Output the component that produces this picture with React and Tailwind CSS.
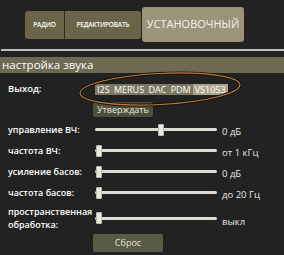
import React from "react";

const rows = [
  { label: "управление ВЧ:", value: "0 дБ", pos: 63 },
  { label: "частота ВЧ:", value: "от 1 кГц", pos: 1 },
  { label: "усиление басов:", value: "0 дБ", pos: 1 },
  { label: "частота басов:", value: "до 20 Гц", pos: 1 },
];

function Slider({ pos }) {
  return (
    <div className="relative w-[122px] h-[12px] flex items-center">
      <div className="w-full h-[3px] bg-[#dcdcd4] rounded-sm" />
      <div
        className="absolute top-0 w-[6px] h-[12px] bg-[#e8e8e0] rounded-[1px] border border-[#bdbdb0]"
        style={{ left: pos }}
      />
    </div>
  );
}

function App() {
  return (
    <div
      className="relative w-[284px] h-[255px] bg-[#222222] text-white overflow-hidden"
      style={{ fontFamily: "'Open Sans', 'DejaVu Sans', sans-serif" }}
    >
      <div className="flex items-center h-[35px] mt-[7px] ml-[25px]">
        <div className="flex h-[28px] bg-[#6a6549] rounded-[3px]">
          <div className="w-[40px] flex items-center justify-center text-[6.5px] font-semibold tracking-tight border-r border-[#2a2a22]">
            РАДИО
          </div>
          <div className="w-[76px] flex items-center justify-center text-[6.5px] font-semibold tracking-tight">
            РЕДАКТИРОВАТЬ
          </div>
        </div>
        <div className="w-[102px] h-[35px] ml-[1px] bg-[#9a9478] rounded-[3px] flex items-center justify-center text-[11px] text-[#f4f2ea]">
          УСТАНОВОЧНЫЙ
        </div>
      </div>

      <div className="h-[2px] bg-[#bdbdb5] mt-[7px] ml-[1px]" />

      <div className="mt-[6px] h-[16px] bg-[#6e6a52] flex items-center pl-[2px] text-[11.5px] leading-none">
        настройка звука
      </div>

      <div className="flex items-center h-[22px] mt-[5px]">
        <div className="w-[95px] pl-[8px] text-[9.5px] font-semibold">Выход:</div>
        <div className="flex h-[11px] bg-[#7b7862] text-[9px] leading-none items-center [word-spacing:2px]">
          <span className="px-[2px]">I2S MERUS DAC PDM</span>
          <span className="px-[2px] h-full flex items-center bg-[#aaa58a]">VS1053</span>
        </div>
      </div>

      <div className="ml-[93px] mt-[2px] w-[60px] h-[15px] bg-[#4f4f3e] rounded-[2px] flex items-center justify-center text-[9px] text-[#e8e8dc]">
        Утверждать
      </div>

      <div className="mt-[2px]">
        {rows.map((r) => (
          <div key={r.label} className="flex items-center h-[21px]">
            <div className="w-[95px] pl-[8px] text-[9px] font-semibold">{r.label}</div>
            <Slider pos={r.pos} />
            <div className="ml-[5px] mt-[6px] text-[9.5px] text-[#e8e8e0]">{r.value}</div>
          </div>
        ))}
        <div className="flex items-center h-[30px]">
          <div className="w-[95px] pl-[8px] text-[9px] font-semibold leading-[13px]">
            пространственная
            <br />
            обработка:
          </div>
          <Slider pos={1} />
          <div className="ml-[5px] mt-[8px] text-[9.5px] text-[#e8e8e0]">выкл</div>
        </div>
      </div>

      <div className="ml-[93px] mt-[1px] w-[70px] h-[18px] bg-[#5a5b46] rounded-[2px] flex items-center justify-center text-[9px] text-[#e4e4d8]">
        Сброс
      </div>

      <svg className="absolute left-0 top-0 pointer-events-none" width="284" height="255">
        <ellipse cx="160" cy="89" rx="80" ry="15.5" transform="rotate(-3 160 89)" fill="none" stroke="#1a1208" strokeWidth="3" />
        <ellipse cx="160" cy="89" rx="80" ry="15.5" transform="rotate(-3 160 89)" fill="none" stroke="#b77a40" strokeWidth="1.2" />
      </svg>
    </div>
  );
}

export default App;
